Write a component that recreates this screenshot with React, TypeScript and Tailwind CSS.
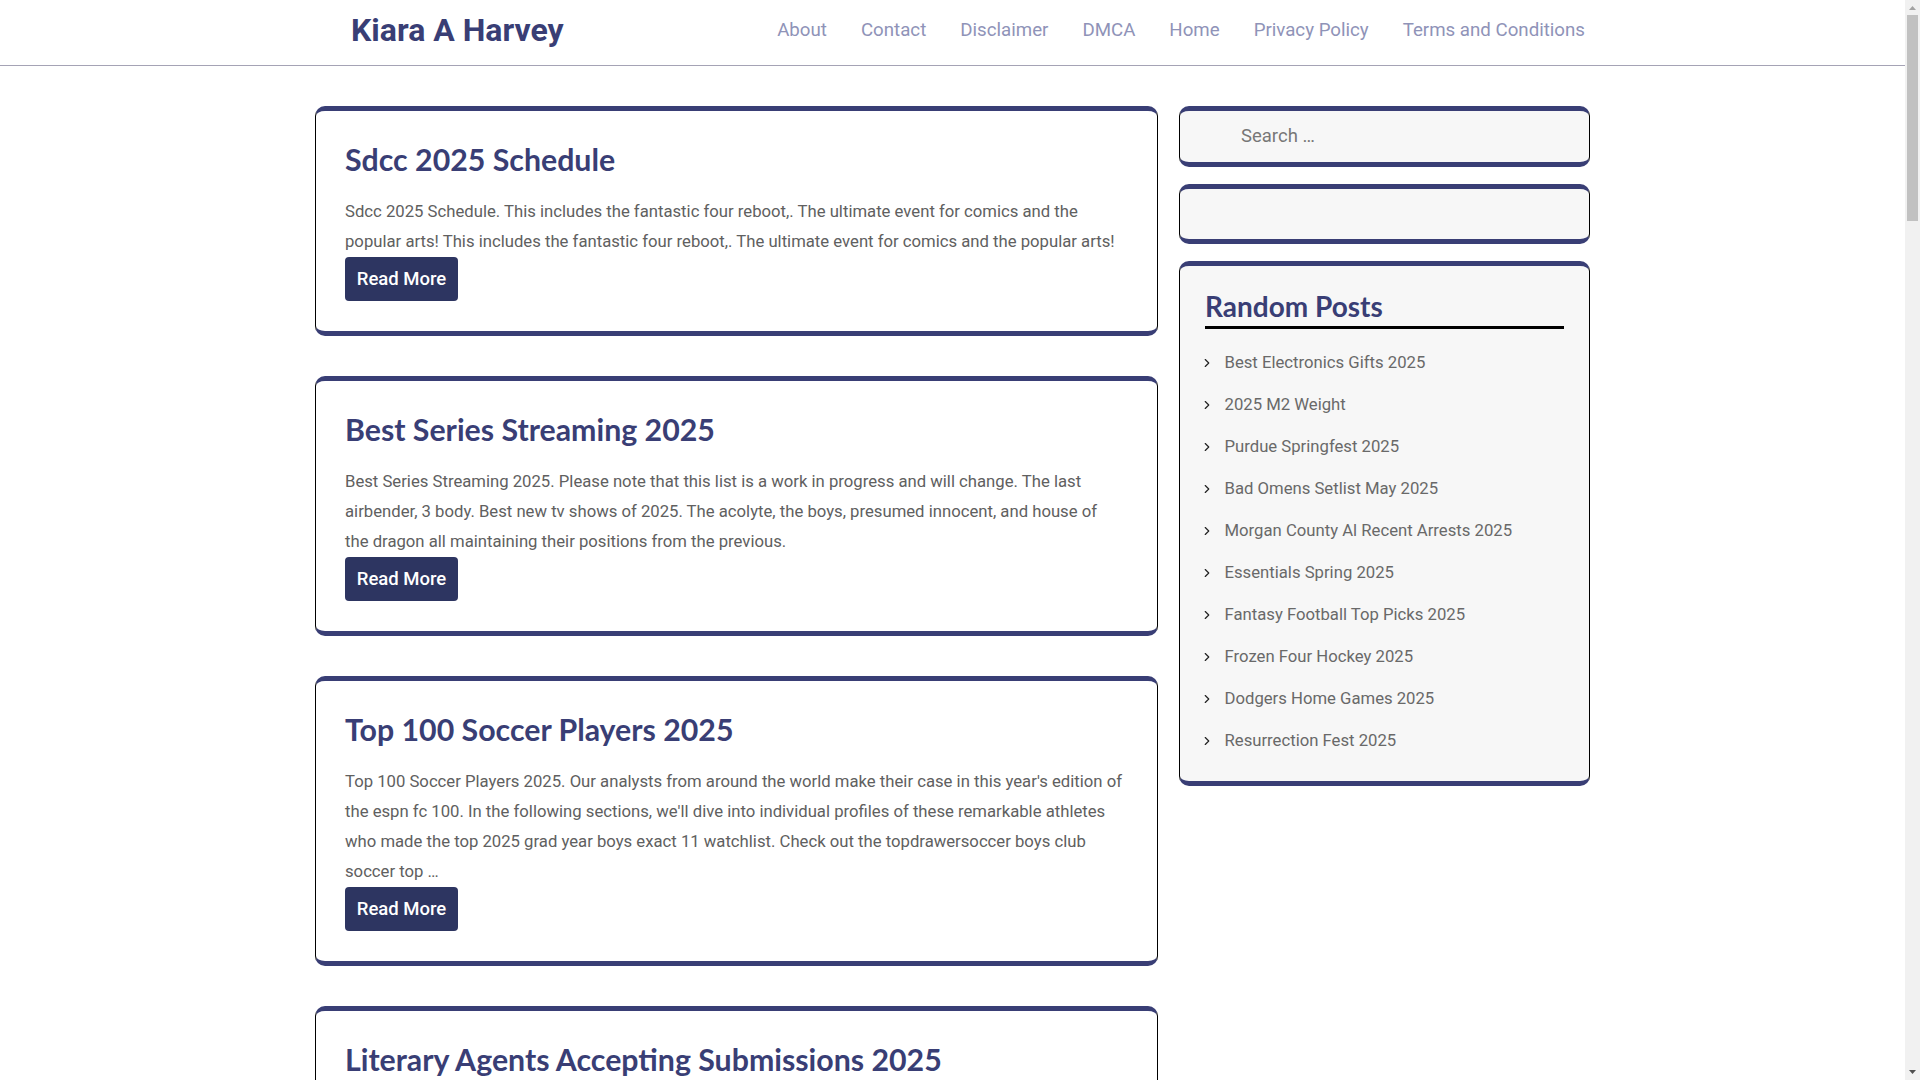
import { ChevronRight } from "lucide-react";

const NAV = ["About", "Contact", "Disclaimer", "DMCA", "Home", "Privacy Policy", "Terms and Conditions"];

const POSTS = [
  {
    title: "Sdcc 2025 Schedule",
    lines: [
      "Sdcc 2025 Schedule. This includes the fantastic four reboot,. The ultimate event for comics and the",
      "popular arts! This includes the fantastic four reboot,. The ultimate event for comics and the popular arts!",
    ],
  },
  {
    title: "Best Series Streaming 2025",
    lines: [
      "Best Series Streaming 2025. Please note that this list is a work in progress and will change. The last",
      "airbender, 3 body. Best new tv shows of 2025. The acolyte, the boys, presumed innocent, and house of",
      "the dragon all maintaining their positions from the previous.",
    ],
  },
  {
    title: "Top 100 Soccer Players 2025",
    lines: [
      "Top 100 Soccer Players 2025. Our analysts from around the world make their case in this year's edition of",
      "the espn fc 100. In the following sections, we'll dive into individual profiles of these remarkable athletes",
      "who made the top 2025 grad year boys exact 11 watchlist. Check out the topdrawersoccer boys club",
      "soccer top …",
    ],
  },
  {
    title: "Literary Agents Accepting Submissions 2025",
    lines: [],
  },
];

const RANDOM = [
  "Best Electronics Gifts 2025",
  "2025 M2 Weight",
  "Purdue Springfest 2025",
  "Bad Omens Setlist May 2025",
  "Morgan County Al Recent Arrests 2025",
  "Essentials Spring 2025",
  "Fantasy Football Top Picks 2025",
  "Frozen Four Hockey 2025",
  "Dodgers Home Games 2025",
  "Resurrection Fest 2025",
];

function PostCard({ title, lines }: { title: string; lines: string[] }) {
  return (
    <article className="rounded-[10px] border border-y-[5px] border-black border-y-[#393e75] bg-white px-[29px] pt-[30px] pb-[30px]">
      <h2 className="h-[36px] font-['Lato',sans-serif] text-[30.3px] leading-[36px] font-bold whitespace-nowrap text-[#393e75]">
        {title}
      </h2>
      {lines.length > 0 && (
        <>
          <div className="mt-[20px] text-[16.7px] leading-[30px] text-[#606060]">
            {lines.map((l) => (
              <p key={l} className="whitespace-nowrap">
                {l}
              </p>
            ))}
          </div>
          <a className="flex h-[44px] w-[113px] items-center justify-center rounded-[4px] bg-[#2d3561] pt-[1px] text-[18.5px] font-medium text-white">
            Read More
          </a>
        </>
      )}
    </article>
  );
}

// the browser's scrollbar, which the photographed page does not get by itself
function Scrollbar() {
  return (
    <div className="flex h-full w-[15px] shrink-0 flex-col items-center bg-[#f1f1f1]">
      <svg className="mt-[6px] h-[4px] w-[7px]" viewBox="0 0 7 4">
        <path d="M3.5 0L7 4H0z" fill="#a3a3a3" />
      </svg>
      <div className="mt-[5px] h-[206px] w-[11px] bg-[#c1c1c1]" />
      <svg className="mt-auto mb-[6px] h-[4px] w-[7px]" viewBox="0 0 7 4">
        <path d="M0 0H7L3.5 4z" fill="#505050" />
      </svg>
    </div>
  );
}

export default function App() {
  return (
    <div className="flex h-screen overflow-hidden bg-white font-['Roboto',sans-serif]">
      <div className="min-w-0 flex-1 overflow-hidden">
        <header className="h-[66px] border-b border-[#a5a3b5] bg-white">
          <div className="mx-auto flex h-[65px] w-[1275px] items-center justify-between pr-[5px] pb-[4px] pl-[36px]">
            <h1 className="pb-[2px] text-[32px] font-bold text-[#393e75]">Kiara A Harvey</h1>
            <nav className="flex gap-[34px] text-[18.7px] text-[#8f93b8]">
              {NAV.map((n) => (
                <a key={n}>{n}</a>
              ))}
            </nav>
          </div>
        </header>
        <main className="mx-auto flex w-[1275px] items-start gap-[21px] pt-[40px]">
          <div className="flex w-[843px] flex-col gap-[40px]">
            {POSTS.map((p) => (
              <PostCard key={p.title} title={p.title} lines={p.lines} />
            ))}
          </div>
          <aside className="flex w-[411px] flex-col gap-[17px]">
            <div className="h-[61px] rounded-[10px] border border-y-[5px] border-black border-y-[#393e75] bg-[#f7f7f7] pl-[61px]">
              <div className="text-[18.5px] leading-[50px] text-[#777]">Search …</div>
            </div>
            <div className="h-[60px] rounded-[10px] border border-y-[5px] border-black border-y-[#393e75] bg-[#f7f7f7]" />
            <div className="rounded-[10px] border border-y-[5px] border-black border-y-[#393e75] bg-[#f7f7f7] px-[25px] pt-[22px] pb-[19px]">
              <h3 className="border-b-[3px] border-black pb-[2px] font-['Lato',sans-serif] text-[28px] leading-[36px] font-bold text-[#393e75]">
                Random Posts
              </h3>
              <ul className="mt-[13px] text-[16.7px] text-[#696969]">
                {RANDOM.map((r) => (
                  <li key={r} className="flex h-[42px] items-center">
                    <ChevronRight size={14} strokeWidth={2} className="mr-[10.5px] -ml-[5px] shrink-0 text-[#222]" />
                    <span>{r}</span>
                  </li>
                ))}
              </ul>
            </div>
          </aside>
        </main>
      </div>
      <Scrollbar />
    </div>
  );
}
